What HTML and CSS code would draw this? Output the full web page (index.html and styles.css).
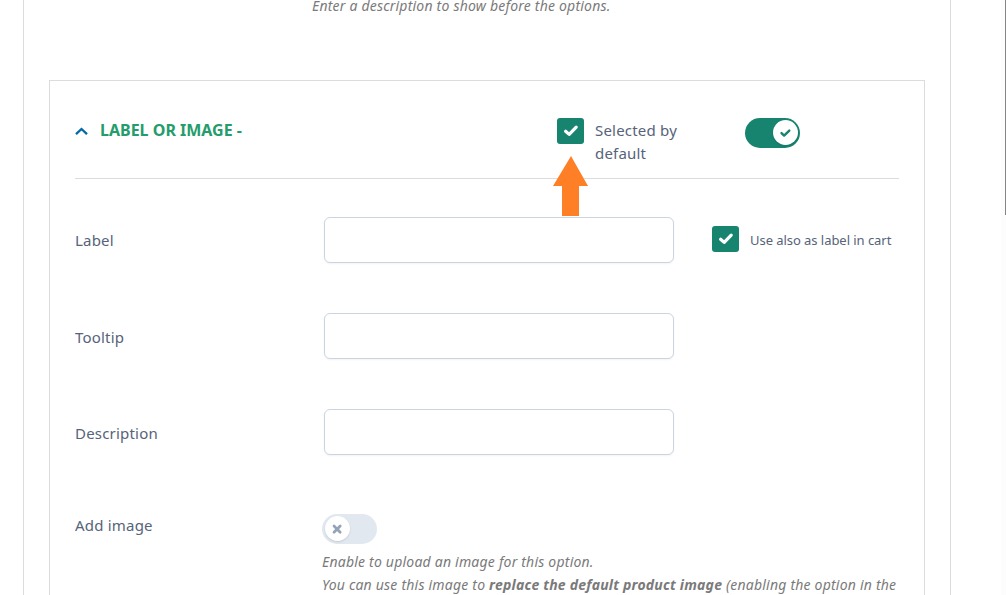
FILE: index.html
```html
<!DOCTYPE html>
<html lang="en">
<head>
    <meta charset="UTF-8">
    <meta name="viewport" content="width=device-width, initial-scale=1.0">
    <title>Product options</title>
    <link rel="stylesheet" href="styles.css">
</head>
<body>
    <div class="panel">
        <p class="hint hint-top">Enter a description to show before the options.</p>

        <div class="option">
            <!-- Option header -->
            <div class="option-header">
                <div class="option-title">
                    <svg class="chevron" width="14" height="8" viewBox="0 0 14 8"><path d="M1 7.2 L6.5 2 L12 7.2" fill="none" stroke="#0369a8" stroke-width="2.3"/></svg>
                    <h3>LABEL OR IMAGE -</h3>
                </div>
                <label class="default-choice">
                    <span class="checkbox">
                        <svg width="27" height="26" viewBox="0 0 27 26"><path d="M8.6 13.2 L12.2 16.4 L19.2 9.2" fill="none" stroke="#fff" stroke-width="3.2" stroke-linecap="round" stroke-linejoin="round"/></svg>
                    </span>
                    <span class="default-text">Selected by<br>default</span>
                </label>
                <div class="toggle on">
                    <span class="knob">
                        <svg width="25" height="25" viewBox="0 0 25 25"><path d="M8.5 13.1 L11.1 15.6 L16.3 10.6" fill="none" stroke="#178470" stroke-width="2.4" stroke-linecap="round" stroke-linejoin="round"/></svg>
                    </span>
                </div>
                <svg class="arrow" width="36" height="60" viewBox="0 0 36 60"><path d="M18 0 L35 30 H26 V60 H9 V30 H0 Z" fill="#ff7f27"/></svg>
            </div>

            <!-- Fields -->
            <div class="row">
                <label class="row-label" for="label">Label</label>
                <input type="text" id="label">
                <label class="cart-choice">
                    <span class="checkbox">
                        <svg width="27" height="26" viewBox="0 0 27 26"><path d="M8.6 13.2 L12.2 16.4 L19.2 9.2" fill="none" stroke="#fff" stroke-width="3.2" stroke-linecap="round" stroke-linejoin="round"/></svg>
                    </span>
                    <span>Use also as label in cart</span>
                </label>
            </div>
            <div class="row">
                <label class="row-label low" for="tooltip">Tooltip</label>
                <input type="text" id="tooltip">
            </div>
            <div class="row">
                <label class="row-label low" for="description">Description</label>
                <input type="text" id="description">
            </div>
            <div class="row row-image">
                <span class="row-label">Add image</span>
                <div class="image-field">
                    <div class="toggle">
                        <span class="knob">
                            <svg width="25" height="25" viewBox="0 0 25 25"><path d="M9 10 L15.2 16.2 M15.2 10 L9 16.2" fill="none" stroke="#94a3b8" stroke-width="2.7" stroke-linecap="round"/></svg>
                        </span>
                    </div>
                    <p class="hint">Enable to upload an image for this option.<br>You can use this image to <strong>replace the default product image</strong> (enabling the option in the</p>
                </div>
            </div>
        </div>
    </div>

    <div class="scrollbar"><div class="thumb"></div></div>
</body>
</html>
```

FILE: styles.css
```css
/* Reset */
* {
    margin: 0;
    padding: 0;
    box-sizing: border-box;
}

body {
    font-family: 'Segoe UI', 'Noto Sans', sans-serif;
    font-size: 15px;
    line-height: 23px;
    letter-spacing: 0.2px;
    background-color: #fff;
    color: #56637a;
    height: 595px;
    overflow: hidden;
}

/* Outer panel */
.panel {
    width: 928px;
    height: 595px;
    margin-left: 23px;
    padding: 0 25px;
    border-left: 1px solid #dcdcdc;
    border-right: 1px solid #dcdcdc;
    overflow: hidden;
}

.hint {
    font-size: 14px;
    font-style: italic;
    letter-spacing: 0.21px;
    color: #7a7a7a;
    white-space: nowrap;
}

.hint-top {
    margin-top: -6px;
    margin-bottom: 63px;
    padding-left: 263px;
}

/* Option box */
.option {
    height: 620px;
    padding: 0 25px;
    border: 1px solid #dcdcdc;
}

.option-header {
    position: relative;
    display: grid;
    grid-template-columns: 482px 188px 1fr;
    align-items: start;
    height: 98px;
    padding-top: 37px;
    border-bottom: 1px solid #dcdcdc;
    margin-bottom: 38px;
}

.option-title {
    display: flex;
    align-items: center;
    gap: 11px;
    height: 25px;
}

.option-title h3 {
    font-size: 16px;
    font-weight: 700;
    letter-spacing: 0;
    color: #249c6b;
    white-space: nowrap;
}

.default-choice {
    display: flex;
    gap: 11px;
}

.default-text {
    padding-top: 1px;
    white-space: nowrap;
}

.checkbox {
    flex: none;
    width: 27px;
    height: 26px;
    border-radius: 3px;
    background-color: #178470;
}

.checkbox svg,
.knob svg {
    display: block;
}

/* Toggle */
.toggle {
    width: 55px;
    height: 30px;
    padding: 2px 3px;
    border-radius: 15px;
    background-color: #e2e8f0;
    display: flex;
}

.toggle.on {
    justify-content: flex-end;
    background-color: #178470;
    padding-right: 2px;
}

.knob {
    width: 25px;
    height: 25px;
    border-radius: 50%;
    background-color: #fff;
    box-shadow: 0 1px 2px rgba(0, 0, 0, 0.12);
}

/* Pointer drawn over the header line */
.arrow {
    position: absolute;
    left: 478px;
    top: 75px;
}

/* Rows */
.row {
    display: grid;
    grid-template-columns: 249px 350px 1fr;
    align-items: center;
    height: 46px;
    margin-bottom: 50px;
}

.row-label.low {
    padding-top: 2px;
}

input {
    width: 350px;
    height: 46px;
    padding: 0 12px;
    border: 1px solid #cbd5e1;
    border-radius: 6px;
    background-color: #fff;
    box-shadow: 0 1px 2px rgba(0, 0, 0, 0.05);
    font: inherit;
}

.cart-choice {
    display: flex;
    align-items: flex-start;
    gap: 11px;
    height: 28px;
    padding-left: 38px;
    font-size: 13px;
    line-height: 28px;
    letter-spacing: -0.05px;
    white-space: nowrap;
}

.row-image {
    grid-template-columns: 247px 1fr;
    align-items: start;
    margin-top: 59px;
}

.image-field .hint {
    margin-top: 6px;
}

/* Page scrollbar */
.scrollbar {
    position: fixed;
    top: 0;
    right: 0;
    width: 5px;
    height: 100%;
    background-color: #fcfcfc;
}

.thumb {
    width: 1px;
    height: 215px;
    margin-left: auto;
    background-color: #858585;
}
```
